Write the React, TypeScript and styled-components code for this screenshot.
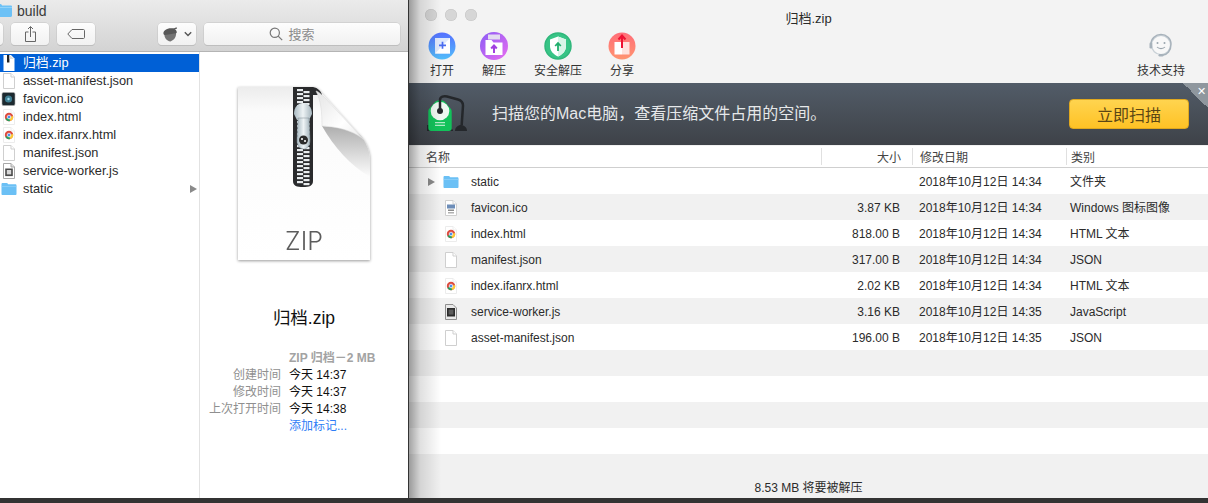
import { createGlobalStyle, styled } from "styled-components";

type FileKind = "zip" | "blank" | "ico" | "react" | "chrome" | "script" | "scriptDark" | "folder";

const FONT = `"Liberation Sans", "Noto Sans CJK SC", sans-serif`;

const GlobalStyle = createGlobalStyle`
  html, body {
    margin: 0;
    padding: 0;
    width: 1208px;
    height: 503px;
    overflow: hidden;
    background: #333333;
    font-family: ${FONT};
  }
`;

const Desktop = styled.div`
  display: flex;
  width: 1208px;
  height: 498px;
  gap: 1px;
`;

/* ---- finder window ---- */

const FinderWindow = styled.section`
  width: 408px;
  display: flex;
  flex-flow: column;
  background: #fff;
  overflow: hidden;
`;

const FinderHeader = styled.header`
  height: 52px;
  flex: none;
  box-sizing: border-box;
  border-bottom: 1px solid #b4b4b4;
  background: linear-gradient(#ebebeb, #d3d3d3);
  display: flex;
  flex-flow: column;
`;

const FinderTitle = styled.div`
  height: 21px;
  display: flex;
  align-items: center;
  gap: 5px;
  margin-left: -5px;
  font-size: 14px;
  line-height: 18px;
  color: #3a3a3a;
`;

const FinderTools = styled.div`
  display: flex;
  margin-top: 2px;
  height: 22px;
  margin-left: -30px;
`;

const ToolButton = styled.div<{ $width: number; $gapLeft: number; $shift?: number }>`
  width: ${(p) => p.$width}px;
  margin-left: ${(p) => p.$gapLeft}px;
  padding-right: ${(p) => p.$shift ?? 0}px;
  box-sizing: border-box;
  height: 22px;
  border-radius: 4px;
  background: linear-gradient(#fdfdfd, #f1f1f1);
  box-shadow: 0 0 0 0.5px #c4c4c4, 0 1px 0 #b8b8b8;
  display: flex;
  align-items: center;
  justify-content: center;
  gap: 5px;
`;

const SearchLabel = styled.span`
  font-size: 13px;
  line-height: 18px;
  padding-top: 1px;
  color: #8c8c8c;
`;

const FinderBody = styled.div`
  flex: 1;
  display: flex;
  min-height: 0;
`;

const Sidebar = styled.ul`
  width: 200px;
  flex: none;
  box-sizing: border-box;
  margin: 0;
  padding: 2px 0 0;
  list-style: none;
  border-right: 1px solid #e2e2e2;
`;

const SidebarRow = styled.li<{ $selected?: boolean }>`
  height: 18px;
  display: flex;
  align-items: center;
  font-size: 12.8px;
  line-height: 18px;
  color: ${(p) => (p.$selected ? "#fff" : "#2b2b2b")};
  background: ${(p) => (p.$selected ? "#0060d6" : "transparent")};

  svg.file {
    margin: 0 6px 0 1px;
  }
`;

const Disclosure = styled.span<{ $color: string }>`
  width: 0;
  height: 0;
  border-left: 7px solid ${(p) => p.$color};
  border-top: 4px solid transparent;
  border-bottom: 4px solid transparent;
`;

const SidebarDisclosure = styled(Disclosure)`
  margin-left: auto;
  margin-right: 2px;
`;

const Preview = styled.aside`
  flex: 1;
  display: flex;
  flex-flow: column;
  align-items: center;
  padding-top: 33px;
  min-width: 0;
`;

const DocIcon = styled.svg`
  width: 136px;
  height: 178px;
  flex: none;
  filter: drop-shadow(0 1px 1.5px rgba(0, 0, 0, 0.4));
`;

const PreviewName = styled.h2`
  margin: 44px 0 0;
  font-size: 17.5px;
  line-height: 22px;
  font-weight: 400;
  color: #111;
`;

const Meta = styled.dl`
  align-self: flex-start;
  margin: 21px 0 0;
  display: grid;
  grid-template-columns: 81px auto;
  column-gap: 8px;
  grid-auto-rows: 17px;
  font-size: 12px;
  line-height: 17px;
  white-space: nowrap;

  dt {
    text-align: right;
    color: #8f8f8f;
  }

  dd {
    margin: 0;
    color: #111;
  }

  dd.kind {
    grid-column: 2;
    color: #a3a3a3;
    font-weight: 700;
  }

  dd.link {
    grid-column: 2;
    color: #2f7df6;
  }
`;

/* ---- archive window ---- */

const ArchiveWindow = styled.section`
  position: relative;
  flex: 1;
  display: flex;
  flex-flow: column;
  background: #f1f1f1;
  overflow: hidden;

  &::before {
    content: "";
    position: absolute;
    top: 0;
    bottom: 0;
    left: 0;
    width: 32px;
    z-index: 2;
    pointer-events: none;
    background: linear-gradient(90deg, rgba(0, 0, 0, 0.36), rgba(0, 0, 0, 0.12) 35%, rgba(0, 0, 0, 0));
  }
`;

const TopBar = styled.header`
  position: relative;
  height: 83px;
  flex: none;
  background: #f3f3f3;
  display: flex;
  flex-flow: column;
`;

const TitleRow = styled.div`
  height: 28px;
  flex: none;
  padding: 0 0 0 16px;
  display: flex;
  align-items: center;
`;

const Lights = styled.div`
  display: flex;
  gap: 8px;
  margin-top: 2px;
`;

const Light = styled.span`
  width: 12px;
  height: 12px;
  border-radius: 50%;
  background: #d6d6d6;
  box-shadow: inset 0 0 0 0.5px #c4c4c4;
`;

const WindowTitle = styled.div`
  position: absolute;
  left: 0;
  right: 0;
  top: 10px;
  text-align: center;
  font-size: 13px;
  line-height: 18px;
  color: #2a2a2a;
`;

const Actions = styled.div`
  display: flex;
  padding: 3px 23px 0 21px;
  gap: 28px;
`;

const Action = styled.div<{ $push?: boolean }>`
  display: flex;
  flex-flow: column;
  align-items: center;
  gap: 2px;
  font-size: 12px;
  line-height: 17px;
  color: #333;
  white-space: nowrap;
  margin-left: ${(p) => (p.$push ? "auto" : "0")};

  svg {
    width: 30px;
    height: 30px;
    margin: 0 -3px;
    display: block;
  }
`;

const Banner = styled.div`
  position: relative;
  height: 62px;
  flex: none;
  box-sizing: border-box;
  padding: 0 19px 0 18px;
  display: flex;
  align-items: center;
  background: linear-gradient(#525c68, #3e4248);
`;

const BannerText = styled.p`
  margin: 0 0 0 25px;
  font-size: 16px;
  line-height: 22px;
  color: #e6e8ea;
  white-space: nowrap;
`;

const ScanButton = styled.button`
  margin-left: auto;
  width: 120px;
  height: 30px;
  padding: 0;
  border: 1px solid #e0a81e;
  border-radius: 4px;
  background: linear-gradient(#ffd44f, #ffc225);
  font-family: ${FONT};
  font-size: 16px;
  color: #5b4614;
`;

const BannerClose = styled.span`
  position: absolute;
  top: 0;
  right: 0;
  width: 25px;
  height: 25px;
  background: linear-gradient(225deg, #8f979e 50%, transparent 50%);
  color: #fff;
  font-size: 11px;
  line-height: 16px;
  text-align: right;
  box-sizing: border-box;

  &::after {
    content: "✕";
    display: block;
    padding-right: 2px;
  }
`;

const Columns = "412px 91px 154px 1fr";

const TableHead = styled.div`
  height: 22px;
  flex: none;
  margin-top: 1px;
  box-sizing: border-box;
  display: grid;
  grid-template-columns: ${Columns};
  align-items: center;
  background: #fff;
  border-bottom: 1px solid #cfcfcf;
  font-size: 12px;
  color: #444;

  span {
    height: 17px;
    line-height: 20px;
    box-sizing: border-box;
    border-left: 1px solid #e0e0e0;
  }

  span:first-child {
    border-left: 0;
    padding-left: 17px;
  }

  span:nth-child(2) {
    text-align: right;
    padding-right: 11px;
  }

  span:nth-child(3) {
    padding-left: 7px;
  }

  span:nth-child(4) {
    padding-left: 4px;
  }
`;

const Rows = styled.div`
  flex: 1;
  min-height: 0;
`;

const Row = styled.div<{ $striped: boolean }>`
  height: 26px;
  box-sizing: border-box;
  padding-top: 1px;
  display: grid;
  grid-template-columns: ${Columns};
  align-items: center;
  font-size: 12px;
  line-height: 16px;
  color: #2b2b2b;
  background: ${(p) => (p.$striped ? "#f1f1f1" : "#fff")};
`;

const NameCell = styled.div`
  display: flex;
  align-items: center;
  padding-left: 19px;

  svg.file {
    margin-left: 15px;
    margin-right: 12px;
  }
`;

const RowDisclosure = styled(Disclosure)`
  margin-right: -7px;
`;

const SizeCell = styled.div`
  text-align: right;
  padding-right: 12px;
`;

const DateCell = styled.div`
  padding-left: 7px;
`;

const KindCell = styled.div`
  padding-left: 4px;
`;

const Status = styled.footer`
  position: absolute;
  left: 0;
  right: 0;
  bottom: 2px;
  z-index: 1;
  text-align: center;
  font-size: 12px;
  line-height: 16px;
  color: #2b2b2b;
`;

/* ---- drawings ---- */

const FolderIcon = ({ size }: { size: number }) => (
  <svg className="file" width={size} height={size} viewBox="0 0 16 16" style={{ flex: "none" }}>
    <path d="M0.5 3.2C0.5 2.5 1 2 1.6 2h4c.5 0 .8.2 1.1.6l.5.7h7.2c.6 0 1.1.5 1.1 1.1v8.5c0 .6-.5 1.1-1.1 1.1H1.6c-.6 0-1.1-.5-1.1-1.1z" fill="#6bc0f5" />
    <path d="M0.5 5h15v.6h-15z" fill="#9ad6fa" />
  </svg>
);

const Page = ({ children, line = "#cfcfcf", fold = "#fff" }: { children?: React.ReactNode; line?: string; fold?: string }) => (
  <>
    <path d="M2.5 .5h7.5l3.500 3.500v11.500h-11z" fill="#fff" stroke={line} strokeWidth="1" />
    <path d="M10 .5v3.500h3.500" fill={fold} stroke={line} strokeWidth="1" />
    {children}
  </>
);

const ChromeMark = () => (
  <g>
    <circle cx="8" cy="8" r="4.200" fill="#dd4b3e" />
    <path d="M8 8 L4.400 10.100 A4.200 4.200 0 0 0 9.100 12z" fill="#1fa463" />
    <path d="M8 8 L9.100 12 A4.200 4.200 0 0 0 12.100 7z" fill="#fcc934" />
    <circle cx="8" cy="8" r="1.800" fill="#4a90f0" stroke="#fff" strokeWidth="0.7" />
  </g>
);

const FileIcon = ({ kind }: { kind: FileKind }) => {
  if (kind === "folder") return <FolderIcon size={16} />;
  return (
    <svg className="file" width="16" height="16" viewBox="0 0 16 16" style={{ flex: "none" }}>
      {kind === "zip" && (
        <>
          <path d="M2.500 0h7.500l3.500 3.500V16h-11z" fill="#fff" />
          <path d="M6 0h2.400v7.500H6z" fill="#222" />
          <path d="M8.500 0v4h4.500z" fill="#ddd" />
        </>
      )}
      {kind === "blank" && <Page />}
      {kind === "react" && (
        <>
          <rect x="1" y="1.500" width="13" height="13" rx="1.500" fill="#1d2a30" stroke="#aaa" strokeWidth="0.6" />
          <circle cx="7.500" cy="8" r="3.600" fill="#3f7f93" />
          <circle cx="7.500" cy="8" r="1.200" fill="#9fdcf0" />
        </>
      )}
      {kind === "ico" && (
        <Page>
          <rect x="4" y="4.500" width="8" height="4" fill="#6d8db8" />
          <rect x="5" y="9.500" width="6" height="1.500" fill="#8c8c8c" />
          <rect x="5" y="12" width="6" height="1.500" fill="#b0b0b0" />
        </Page>
      )}
      {kind === "chrome" && (
        <Page line="#ececec">
          <ChromeMark />
        </Page>
      )}
      {kind === "script" && (
        <Page fold="#ddd" line="#a8a8a8">
          <rect x="4.200" y="5.500" width="7.600" height="7.600" fill="#4a4a4a" />
          <rect x="5.800" y="7" width="4.400" height="4.400" fill="#d8d8d8" />
        </Page>
      )}
      {kind === "scriptDark" && (
        <>
          <path d="M2.500 .5h7.500l3.500 3.500v11.500h-11z" fill="#e9e9e9" stroke="#8f8f8f" strokeWidth="1" />
          <rect x="4" y="4" width="8" height="8.500" fill="#2c2c2c" />
          <rect x="5.600" y="5.600" width="4.800" height="5" fill="#5c5c5c" />
        </>
      )}
    </svg>
  );
};

const FinderFolder = () => (
  <svg width="17" height="15" viewBox="0 0 17 15">
    <path d="M0 2.200C0 1.500.5 1 1.200 1h4.200c.5 0 .8.2 1.100.6l.6.8h8.700c.7 0 1.200.5 1.200 1.200v9.200c0 .7-.5 1.200-1.200 1.200H1.200C.5 14 0 13.500 0 12.800z" fill="#6cc1f6" />
    <path d="M0 4h17v.7H0z" fill="#a3dbfb" />
  </svg>
);

const ShareGlyph = () => (
  <svg width="13" height="16" viewBox="0 0 13 16" fill="none" stroke="#666" strokeWidth="1">
    <path d="M4.500 6H1.500v9.500h10V6H8.500" />
    <path d="M6.500 11V.800M4 3l2.500-2.500L9 3" />
  </svg>
);

const TagGlyph = () => (
  <svg width="18" height="10" viewBox="0 0 18 10" fill="none" stroke="#666" strokeWidth="1">
    <path d="M5 .5h11.500c.5 0 1 .4 1 1v7c0 .6-.5 1-1 1H5L.800 5z" />
  </svg>
);

const AcornGlyph = () => (
  <svg width="17" height="15" viewBox="0 0 17 15">
    <path d="M2.500 6.500C1.800 10 4.500 14 8.500 14.500C12 13 14.500 10 14 6z" fill="#747474" />
    <path d="M1.500 7C.8 3.500 5 1 9.500 1.200C12.500 1.300 14.800 3 14.800 5.200C14.800 6 14 6.500 13 6.500L3 8C2.200 8 1.700 7.700 1.500 7z" fill="#585858" />
    <path d="M10.500 2 14.500.3l.6 1.200-4 1.700z" fill="#585858" />
  </svg>
);

const Caret = () => (
  <svg width="8" height="6" viewBox="0 0 8 6" fill="none" stroke="#555" strokeWidth="1.400">
    <path d="M.8 1.200 4 4.400l3.200-3.200" />
  </svg>
);

const SearchGlyph = () => (
  <svg width="14" height="14" viewBox="0 0 14 14" fill="none" stroke="#777" strokeWidth="1.200">
    <circle cx="5.800" cy="5.800" r="4.600" />
    <path d="m9.200 9.200 4 4" />
  </svg>
);

const teeth = Array.from({ length: 24 }, (_, i) => i * 4 + 2);

const ZipDocument = () => (
  <DocIcon viewBox="0 0 136 178">
    <defs>
      <linearGradient id="sheet" x1="0" y1="0" x2="0" y2="1">
        <stop offset="0" stopColor="#ececec" />
        <stop offset="0.14" stopColor="#fbfbfb" />
        <stop offset="1" stopColor="#fff" />
      </linearGradient>
      <linearGradient id="curlShade" x1="0" y1="0" x2="0" y2="1">
        <stop offset="0" stopColor="#aeaeae" />
        <stop offset="1" stopColor="#fdfdfd" />
      </linearGradient>
      <linearGradient id="flap" x1="0" y1="0" x2="1" y2="1">
        <stop offset="0" stopColor="#e4e4e4" />
        <stop offset="0.6" stopColor="#fff" />
        <stop offset="1" stopColor="#e9e9e9" />
      </linearGradient>
      <linearGradient id="metal" x1="0" y1="0" x2="1" y2="0">
        <stop offset="0" stopColor="#a9bac2" />
        <stop offset="0.5" stopColor="#eef3f5" />
        <stop offset="1" stopColor="#a5b5bd" />
      </linearGradient>
    </defs>
    <g transform="translate(2 2)">
      <path d="M0 0H77C80 1 82 3 84 6L126 53C130 59 132 66 132 73V173H0z" fill="url(#sheet)" />
      <path d="M84 39C100 40 115 42 122 48C128 54 132 64 132 73V90C112 78 96 60 84 39z" fill="url(#curlShade)" />
      <path d="M55 0H75C80 1 83 4 84 8H75V94C75 99 71 100 65 100C59 100 55 99 55 94z" fill="#2a2b2d" />
      <path d="M84 39C84 25 83 14 78 4C80 4 84 8 88 12L126 53C120 47 106 40 84 39z" fill="url(#flap)" stroke="#d8d8d8" strokeWidth="0.5" />
      {teeth.map((y) => (
        <g key={y} fill="#e8ecee">
          <rect x="59" y={y} width="6" height="2.200" />
          <rect x="65.500" y={y + 2} width="6" height="2.200" />
        </g>
      ))}
      <path d="M56 27C56 20 60 16 65 16C70 16 74 20 74 27L71 33H59z" fill="url(#metal)" />
      <path d="M60 31H71L72 53C72 59 69 62 65.500 62C62 62 59 59 59 53z" fill="url(#metal)" stroke="#7c8a92" strokeWidth="0.5" />
      <circle cx="65.500" cy="53" r="4.500" fill="#2c2c2c" />
      <path d="M63 51h2v2h-2zM66 53h2v2h-2z" fill="#cfcfcf" />
      <text x="66" y="163" textAnchor="middle" fontFamily="Inter, sans-serif" fontWeight="300" fontSize="25" fill="#5c5c5c">
        ZIP
      </text>
    </g>
  </DocIcon>
);

const OpenIcon = () => (
  <svg viewBox="0 0 30 30">
    <defs>
      <linearGradient id="openBg" x1="0" y1="0" x2="0" y2="1">
        <stop offset="0" stopColor="#5570ff" />
        <stop offset="1" stopColor="#52bdfa" />
      </linearGradient>
    </defs>
    <circle cx="15" cy="15" r="13.500" fill="url(#openBg)" />
    <rect x="8" y="7" width="15" height="15.500" fill="#dfe9fc" />
    <path d="M8 22.500 23 7v15.500z" fill="#ffffff" />
    <path d="M15.500 10.800v7M12 14.300h7" stroke="#4a6cf0" strokeWidth="1.700" />
  </svg>
);

const ExtractIcon = () => (
  <svg viewBox="0 0 30 30">
    <defs>
      <linearGradient id="extractBg" x1="0" y1="0" x2="1" y2="1">
        <stop offset="0" stopColor="#8a5cf5" />
        <stop offset="1" stopColor="#e86cf0" />
      </linearGradient>
    </defs>
    <circle cx="15" cy="15" r="14" fill="url(#extractBg)" />
    <path d="M9 3.500h12v5H9z" fill="#e3dcf0" />
    <path d="M6.500 9h6l2 2.500h9V24h-17z" fill="#fff" />
    <path d="M15 22v-7M12.200 17.500l2.800-3 2.800 3" fill="none" stroke="#a13fe0" strokeWidth="2" />
  </svg>
);

const SafeIcon = () => (
  <svg viewBox="0 0 30 30">
    <circle cx="15" cy="15" r="13" fill="#37c486" stroke="#2fb77b" strokeWidth="1.500" />
    <path d="M15 5.500 23 8.500V15C23 20 19.500 23.500 15 25.500 10.500 23.500 7 20 7 15V8.500z" fill="#fff" />
    <path d="M15 5.500 23 8.500V15C23 20 19.500 23.500 15 25.500z" fill="#d9f5e8" />
    <path d="M15 20v-7.500M12.200 15l2.800-3 2.800 3" fill="none" stroke="#1fae6c" strokeWidth="1.800" />
  </svg>
);

const ShareIcon = () => (
  <svg viewBox="0 0 30 30">
    <defs>
      <linearGradient id="shareBg" x1="0" y1="0" x2="0" y2="1">
        <stop offset="0" stopColor="#ff6d78" />
        <stop offset="1" stopColor="#ff9470" />
      </linearGradient>
    </defs>
    <circle cx="15" cy="15" r="13.500" fill="url(#shareBg)" />
    <rect x="7.500" y="11" width="7.500" height="12.500" fill="#fff" />
    <rect x="15" y="11" width="7.500" height="12.500" fill="#ffe2de" />
    <path d="M15 17V4.500M11.500 8.500 15 4.500l3.500 4" fill="none" stroke="#ee1133" strokeWidth="2" />
  </svg>
);

const SupportIcon = () => (
  <svg viewBox="0 0 30 30" fill="none">
    <circle cx="15" cy="14" r="9.500" fill="#f8f8f8" stroke="#c8d0d6" strokeWidth="1.200" />
    <path d="M5 17V13C5 7.500 9.500 3.500 15 3.500S25 7.500 25 13c0 7-4 10.500-8 11" stroke="#a7b2bb" strokeWidth="1.500" />
    <rect x="3.500" y="11.500" width="2.800" height="6" rx="1.200" fill="#a7b2bb" />
    <rect x="12.500" y="23" width="5" height="2.500" rx="1.200" fill="#a7b2bb" />
    <circle cx="11.500" cy="12" r="1" fill="#9aa5ad" />
    <circle cx="18.500" cy="12" r="1" fill="#9aa5ad" />
    <path d="M11 16c2 2.200 6 2.200 8 0" stroke="#9aa5ad" strokeWidth="1.100" />
  </svg>
);

const CleanerIcon = () => (
  <svg width="40" height="40" viewBox="0 0 40 40" style={{ flex: "none" }}>
    <path d="M1.300 31h-1.300v6h26v-1.500H2.500V31z" fill="#24272b" />
    <path d="M8 8C10 5.500 16 5.500 18 8L23.500 14.500C24.500 15.500 24.700 16.500 24.700 18V34C24.700 36 23.500 37 22 37H4C2.500 37 1.300 36 1.300 34V18C1.300 16.500 1.500 15.500 2.500 14.500z" fill="#12c25a" />
    <circle cx="13" cy="17" r="9.300" fill="#eef7f1" />
    <path d="M13 17V6C13 2.500 17 1.800 20 2.500L31 5.500C34.500 6.500 36 8.500 36 11.500L34.700 31" fill="none" stroke="#24272b" strokeWidth="2.500" />
    <circle cx="13" cy="17" r="3" fill="#24272b" />
    <path d="M28 37C28 33.500 31 31 34 31S40 33.500 40 37z" fill="#24272b" />
    <path d="M8 28.700h10M8 31.300h10" stroke="#d8f5e2" strokeWidth="1" />
  </svg>
);

/* ---- data ---- */

const sidebarFiles: { name: string; kind: FileKind }[] = [
  { name: "归档.zip", kind: "zip" },
  { name: "asset-manifest.json", kind: "blank" },
  { name: "favicon.ico", kind: "react" },
  { name: "index.html", kind: "chrome" },
  { name: "index.ifanrx.html", kind: "chrome" },
  { name: "manifest.json", kind: "blank" },
  { name: "service-worker.js", kind: "script" },
  { name: "static", kind: "folder" },
];

const archiveFiles: { name: string; kind: FileKind; size: string; date: string; type: string }[] = [
  { name: "static", kind: "folder", size: "", date: "2018年10月12日 14:34", type: "文件夹" },
  { name: "favicon.ico", kind: "ico", size: "3.87 KB", date: "2018年10月12日 14:34", type: "Windows 图标图像" },
  { name: "index.html", kind: "chrome", size: "818.00 B", date: "2018年10月12日 14:34", type: "HTML 文本" },
  { name: "manifest.json", kind: "blank", size: "317.00 B", date: "2018年10月12日 14:34", type: "JSON" },
  { name: "index.ifanrx.html", kind: "chrome", size: "2.02 KB", date: "2018年10月12日 14:34", type: "HTML 文本" },
  { name: "service-worker.js", kind: "scriptDark", size: "3.16 KB", date: "2018年10月12日 14:35", type: "JavaScript" },
  { name: "asset-manifest.json", kind: "blank", size: "196.00 B", date: "2018年10月12日 14:35", type: "JSON" },
];

const EMPTY_ROWS = 5;

const App = (): JSX.Element => {
  return (
    <>
      <GlobalStyle />
      <Desktop>
        <FinderWindow>
          <FinderHeader>
            <FinderTitle>
              <FinderFolder />
              build
            </FinderTitle>
            <FinderTools>
              <ToolButton $width={33} $gapLeft={0} />
              <ToolButton $width={38} $gapLeft={8}>
                <ShareGlyph />
              </ToolButton>
              <ToolButton $width={38} $gapLeft={8}>
                <TagGlyph />
              </ToolButton>
              <ToolButton $width={38} $gapLeft={63}>
                <AcornGlyph />
                <Caret />
              </ToolButton>
              <ToolButton $width={196} $gapLeft={8} $shift={20}>
                <SearchGlyph />
                <SearchLabel>搜索</SearchLabel>
              </ToolButton>
            </FinderTools>
          </FinderHeader>
          <FinderBody>
            <Sidebar>
              {sidebarFiles.map((file, index) => (
                <SidebarRow key={file.name} $selected={index === 0}>
                  <FileIcon kind={file.kind} />
                  {file.name}
                  {file.kind === "folder" && <SidebarDisclosure $color="#8a8a8a" />}
                </SidebarRow>
              ))}
            </Sidebar>
            <Preview>
              <ZipDocument />
              <PreviewName>归档.zip</PreviewName>
              <Meta>
                <dd className="kind">ZIP 归档－2 MB</dd>
                <dt>创建时间</dt>
                <dd>今天 14:37</dd>
                <dt>修改时间</dt>
                <dd>今天 14:37</dd>
                <dt>上次打开时间</dt>
                <dd>今天 14:38</dd>
                <dd className="link">添加标记...</dd>
              </Meta>
            </Preview>
          </FinderBody>
        </FinderWindow>

        <ArchiveWindow>
          <TopBar>
            <WindowTitle>归档.zip</WindowTitle>
            <TitleRow>
              <Lights>
                <Light />
                <Light />
                <Light />
              </Lights>
            </TitleRow>
            <Actions>
              <Action>
                <OpenIcon />
                打开
              </Action>
              <Action>
                <ExtractIcon />
                解压
              </Action>
              <Action>
                <SafeIcon />
                安全解压
              </Action>
              <Action>
                <ShareIcon />
                分享
              </Action>
              <Action $push>
                <SupportIcon />
                技术支持
              </Action>
            </Actions>
          </TopBar>
          <Banner>
            <CleanerIcon />
            <BannerText>扫描您的Mac电脑，查看压缩文件占用的空间。</BannerText>
            <ScanButton>立即扫描</ScanButton>
            <BannerClose />
          </Banner>
          <TableHead>
            <span>名称</span>
            <span>大小</span>
            <span>修改日期</span>
            <span>类别</span>
          </TableHead>
          <Rows>
            {archiveFiles.map((file, index) => (
              <Row key={file.name} $striped={index % 2 === 1}>
                <NameCell>
                  {file.kind === "folder" && <RowDisclosure $color="#8a8a8a" />}
                  <FileIcon kind={file.kind} />
                  {file.name}
                </NameCell>
                <SizeCell>{file.size}</SizeCell>
                <DateCell>{file.date}</DateCell>
                <KindCell>{file.type}</KindCell>
              </Row>
            ))}
            {Array.from({ length: EMPTY_ROWS }, (_, i) => (
              <Row key={i} $striped={(i + archiveFiles.length) % 2 === 1} />
            ))}
          </Rows>
          <Status>8.53 MB 将要被解压</Status>
        </ArchiveWindow>
      </Desktop>
    </>
  );
};

export default App;
